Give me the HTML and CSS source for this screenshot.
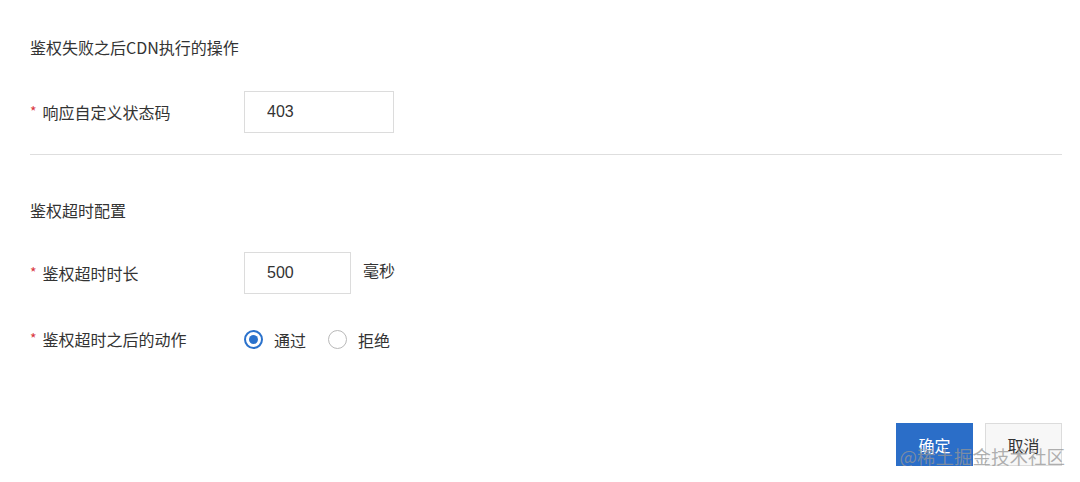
FILE: index.html
```html
<!DOCTYPE html>
<html>
<head>
<meta charset="UTF-8">
<title>鉴权配置</title>
<link rel="stylesheet" href="styles.css">
</head>
<body>
	<div class="panel">
		<h3 class="title">鉴权失败之后CDN执行的操作</h3>
		<div class="row row-first">
			<label class="label"><span class="req">*</span>响应自定义状态码</label>
			<input class="ipt ipt-wide" type="text" value="403">
		</div>
		<hr class="line">
		<h3 class="title title-second">鉴权超时配置</h3>
		<div class="row row-time">
			<label class="label"><span class="req">*</span>鉴权超时时长</label>
			<input class="ipt ipt-short" type="text" value="500">
			<span class="unit">毫秒</span>
		</div>
		<div class="row row-radio">
			<label class="label"><span class="req">*</span>鉴权超时之后的动作</label>
			<span class="radio on"></span><span class="radio-text">通过</span>
			<span class="radio"></span><span class="radio-text">拒绝</span>
		</div>
		<div class="btns">
			<button class="btn btn-ok">确定</button>
			<button class="btn btn-cancel">取消</button>
			<span class="mark">@稀土掘金技术社区</span>
		</div>
	</div>
</body>
</html>
```

FILE: styles.css
```css
body {
	margin: 0;
	background: #fff;
	font-family: "Noto Sans CJK SC", "Liberation Sans", sans-serif;
	color: #333;
	font-size: 16px;
}

.panel {
	padding: 36px 18px 0 30px;
}

.title {
	margin: 0;
	font-size: 16px;
	font-weight: normal;
	line-height: 22px;
}

.title-second {
	margin-top: 44px;
}

.row {
	display: flex;
	align-items: center;
}

.row-first {
	margin-top: 33px;
}

.row-time {
	margin-top: 31px;
}

.row-radio {
	margin-top: 34px;
}

.label {
	display: inline-block;
	width: 214px;
	line-height: 22px;
}

.req {
	color: #d9363e;
	margin-right: 6px;
	font-size: 14px;
	position: relative;
	top: -2px;
}

.ipt {
	box-sizing: border-box;
	height: 42px;
	border: 1px solid #dcdcdc;
	padding: 0 22px;
	font-family: "Liberation Sans", sans-serif;
	font-size: 16px;
	color: #333;
	outline: none;
}

.ipt-wide {
	width: 150px;
}

.ipt-short {
	width: 107px;
}

.unit {
	margin-left: 12px;
	position: relative;
	top: -3px;
}

.radio {
	box-sizing: border-box;
	width: 19px;
	height: 19px;
	border: 1px solid #b9b9b9;
	border-radius: 50%;
	display: inline-block;
	margin-right: 11px;
}

.radio.on {
	border: 2px solid #2b72cc;
	padding: 3px;
	background: #2b72cc;
	background-clip: content-box;
}

.radio-text {
	margin-right: 22px;
	line-height: 22px;
}

.line {
	border: none;
	border-top: 1px solid #dedede;
	margin: 21px 0 0 0;
}

.btns {
	display: flex;
	justify-content: flex-end;
	gap: 12px;
	margin-top: 72px;
	position: relative;
}

.btn {
	width: 77px;
	height: 43px;
	font-family: "Noto Sans CJK SC", sans-serif;
	font-size: 16px;
	border: 1px solid #dcdcdc;
	cursor: pointer;
}

.btn-ok {
	background: #2b6ec8;
	border-color: #2b6ec8;
	color: #fff;
}

.btn-cancel {
	background: #f7f7f7;
	color: #333;
}

.mark {
	position: absolute;
	right: -3px;
	top: 20px;
	font-size: 18.5px;
	color: rgba(150, 150, 150, 0.75);
}
```
